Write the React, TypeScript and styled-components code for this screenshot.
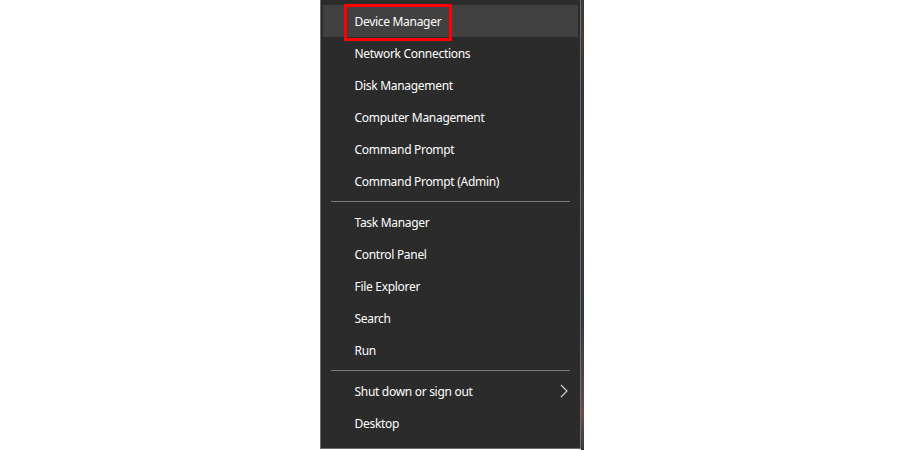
import React from "react";
import styled, { createGlobalStyle } from "styled-components";

const Global = createGlobalStyle`
  html, body { margin: 0; padding: 0; background: #ffffff; }
  body { font-family: "Noto Sans", "Open Sans", sans-serif; overflow: hidden; }
`;

const Page = styled.div`
  width: 900px;
  height: 450px;
  display: flex;
  justify-content: center;
  align-items: flex-start;
  padding-left: 3px;
  box-sizing: border-box;
`;

const Menu = styled.div`
  position: relative;
  width: 259px;
  padding: 5px 0 9px;
  background: #2b2b2b;
  border-left: 1px solid #6e6e6e;
  border-right: 1px solid #6e6e6e;
  border-bottom: 1px solid #6e6e6e;
  display: flex;
  flex-direction: column;
`;

const Sliver = styled.div`
  width: 3px;
  height: 450px;
  background: linear-gradient(
    180deg,
    #3a3a3a 0%,
    #4a3a2a 8%,
    #2f3440 20%,
    #3b3b3b 45%,
    #2e3648 70%,
    #6a4a48 92%,
    #3a3a3a 100%
  );
`;

const Item = styled.div<{ $active?: boolean }>`
  position: relative;
  height: 32px;
  margin: 0 2px;
  padding-left: 32px;
  display: flex;
  align-items: center;
  color: #ffffff;
  font-size: 12px;
  letter-spacing: -0.3px;
  background: ${(p) => (p.$active ? "#414141" : "transparent")};
`;

const Separator = styled.div`
  height: 9px;
  display: flex;
  align-items: center;
  padding: 0 10px;
  &::after {
    content: "";
    flex: 1;
    height: 1px;
    background: #7b7b7b;
  }
`;

const Highlight = styled.div`
  position: absolute;
  left: 21px;
  top: -1px;
  width: 102px;
  height: 31px;
  border: 3px solid #ff0000;
  pointer-events: none;
`;

const Chevron = styled.svg`
  position: absolute;
  right: 10px;
  top: 9px;
  width: 8px;
  height: 14px;
`;

const top = [
  "Network Connections",
  "Disk Management",
  "Computer Management",
  "Command Prompt",
  "Command Prompt (Admin)",
];
const mid = ["Task Manager", "Control Panel", "File Explorer", "Search", "Run"];

export default function App() {
  return (
    <>
      <Global />
      <Page>
        <Menu>
          <Item $active>
            Device Manager
            <Highlight />
          </Item>
          {top.map((t) => (
            <Item key={t}>{t}</Item>
          ))}
          <Separator />
          {mid.map((t) => (
            <Item key={t}>{t}</Item>
          ))}
          <Separator />
          <Item>
            Shut down or sign out
            <Chevron viewBox="0 0 8 14">
              <path d="M1 1 L7 7 L1 13" fill="none" stroke="#cfd6de" strokeWidth="1.1" />
            </Chevron>
          </Item>
          <Item>Desktop</Item>
        </Menu>
        <Sliver />
      </Page>
    </>
  );
}
